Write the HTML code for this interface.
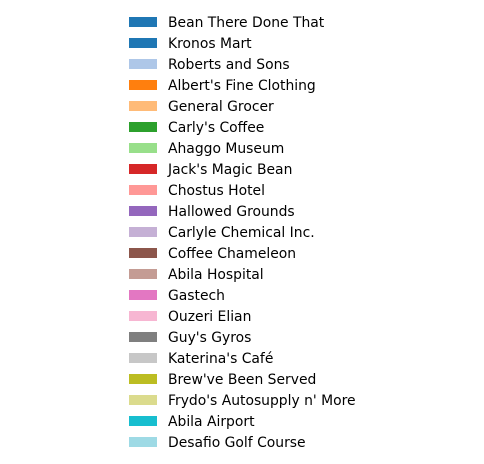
<html><head><style>
body{margin:0;width:484px;height:464px;background:#fff;position:relative;font-family:"DejaVu Sans",sans-serif;font-size:13.9px;color:#000}
.r{position:absolute;left:0;height:21px}
.p{position:absolute;left:129px;top:0;width:28px;height:10px}
.t{position:absolute;left:168px;top:-5px;white-space:nowrap;line-height:22px}
</style></head><body>
<div class="r" style="top:17px"><div class="p" style="background:#1f77b4"></div><div class="t">Bean There Done That</div></div>
<div class="r" style="top:38px"><div class="p" style="background:#1f77b4"></div><div class="t">Kronos Mart</div></div>
<div class="r" style="top:59px"><div class="p" style="background:#aec7e8"></div><div class="t">Roberts and Sons</div></div>
<div class="r" style="top:80px"><div class="p" style="background:#ff7f0e"></div><div class="t">Albert's Fine Clothing</div></div>
<div class="r" style="top:101px"><div class="p" style="background:#ffbb78"></div><div class="t">General Grocer</div></div>
<div class="r" style="top:122px"><div class="p" style="background:#2ca02c"></div><div class="t">Carly's Coffee</div></div>
<div class="r" style="top:143px"><div class="p" style="background:#98df8a"></div><div class="t">Ahaggo Museum</div></div>
<div class="r" style="top:164px"><div class="p" style="background:#d62728"></div><div class="t">Jack's Magic Bean</div></div>
<div class="r" style="top:185px"><div class="p" style="background:#ff9896"></div><div class="t">Chostus Hotel</div></div>
<div class="r" style="top:206px"><div class="p" style="background:#9467bd"></div><div class="t">Hallowed Grounds</div></div>
<div class="r" style="top:227px"><div class="p" style="background:#c5b0d5"></div><div class="t">Carlyle Chemical Inc.</div></div>
<div class="r" style="top:248px"><div class="p" style="background:#8c564b"></div><div class="t">Coffee Chameleon</div></div>
<div class="r" style="top:269px"><div class="p" style="background:#c49c94"></div><div class="t">Abila Hospital</div></div>
<div class="r" style="top:290px"><div class="p" style="background:#e377c2"></div><div class="t">Gastech</div></div>
<div class="r" style="top:311px"><div class="p" style="background:#f7b6d2"></div><div class="t">Ouzeri Elian</div></div>
<div class="r" style="top:332px"><div class="p" style="background:#7f7f7f"></div><div class="t">Guy's Gyros</div></div>
<div class="r" style="top:353px"><div class="p" style="background:#c7c7c7"></div><div class="t">Katerina's Café</div></div>
<div class="r" style="top:374px"><div class="p" style="background:#bcbd22"></div><div class="t">Brew've Been Served</div></div>
<div class="r" style="top:395px"><div class="p" style="background:#dbdb8d"></div><div class="t">Frydo's Autosupply n' More</div></div>
<div class="r" style="top:416px"><div class="p" style="background:#17becf"></div><div class="t">Abila Airport</div></div>
<div class="r" style="top:437px"><div class="p" style="background:#9edae5"></div><div class="t">Desafio Golf Course</div></div>
</body></html>
